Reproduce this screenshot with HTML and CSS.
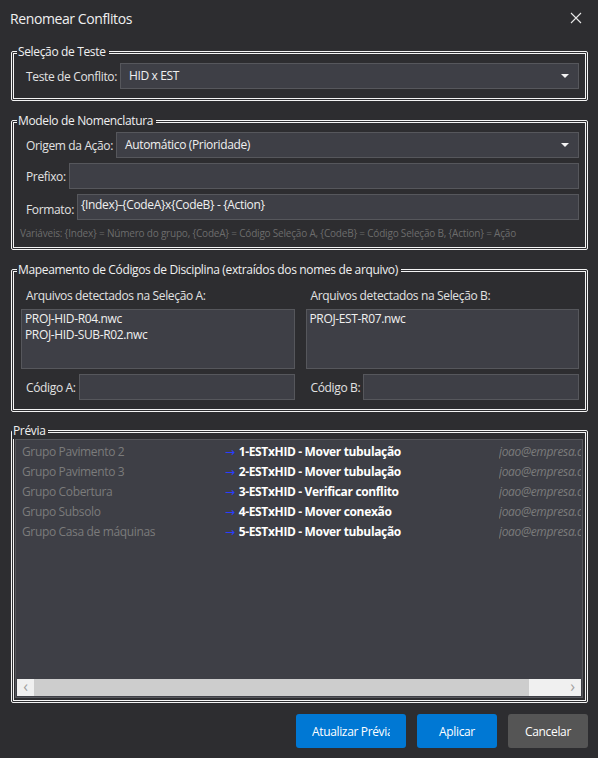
FILE: index.html
```html
<!DOCTYPE html>
<html lang="pt-BR">
<head>
    <meta charset="UTF-8">
    <title>Renomear Conflitos</title>
    <link rel="stylesheet" href="styles.css">
</head>
<body>
    <div class="dialog">
        <div class="titlebar">
            <span class="title">Renomear Conflitos</span>
            <svg class="close" width="12" height="12" viewBox="0 0 12 12">
                <path d="M1 1 L11 11 M11 1 L1 11" stroke="#e8e8e8" stroke-width="1.1" fill="none"/>
            </svg>
        </div>

        <fieldset class="group group-test">
            <legend>Seleção de Teste</legend>
            <div class="row">
                <label class="lbl">Teste de Conflito:</label>
                <div class="combo">HID x EST</div>
            </div>
        </fieldset>

        <fieldset class="group group-naming">
            <legend>Modelo de Nomenclatura</legend>
            <div class="row">
                <label class="lbl">Origem da Ação:</label>
                <div class="combo">Automático (Prioridade)</div>
            </div>
            <div class="row">
                <label class="lbl">Prefixo:</label>
                <div class="input"></div>
            </div>
            <div class="row">
                <label class="lbl lbl-low">Formato:</label>
                <div class="input input-top">{Index}-{CodeA}x{CodeB} - {Action}</div>
            </div>
            <p class="hint">Variáveis: {Index} = Número do grupo, {CodeA} = Código Seleção A, {CodeB} = Código Seleção B, {Action} = Ação</p>
        </fieldset>

        <fieldset class="group group-codes">
            <legend>Mapeamento de Códigos de Disciplina (extraídos dos nomes de arquivo)</legend>
            <div class="codes">
                <div class="side">
                    <label class="lbl">Arquivos detectados na Seleção A:</label>
                    <div class="filelist">
                        <div>PROJ-HID-R04.nwc</div>
                        <div>PROJ-HID-SUB-R02.nwc</div>
                    </div>
                    <div class="row">
                        <label class="lbl">Código A:</label>
                        <div class="input"></div>
                    </div>
                </div>
                <div class="side">
                    <label class="lbl">Arquivos detectados na Seleção B:</label>
                    <div class="filelist">
                        <div>PROJ-EST-R07.nwc</div>
                    </div>
                    <div class="row">
                        <label class="lbl">Código B:</label>
                        <div class="input"></div>
                    </div>
                </div>
            </div>
        </fieldset>

        <fieldset class="group group-preview">
            <legend>Prévia</legend>
            <div class="preview">
                <div class="preview-rows">
                    <div class="prow"><span class="grp">Grupo Pavimento 2</span><span class="new"><span class="arrow">→</span>1-ESTxHID - Mover tubulação</span><span class="who">joao@empresa.com</span></div>
                    <div class="prow"><span class="grp">Grupo Pavimento 3</span><span class="new"><span class="arrow">→</span>2-ESTxHID - Mover tubulação</span><span class="who">joao@empresa.com</span></div>
                    <div class="prow"><span class="grp">Grupo Cobertura</span><span class="new"><span class="arrow">→</span>3-ESTxHID - Verificar conflito</span><span class="who">joao@empresa.com</span></div>
                    <div class="prow"><span class="grp">Grupo Subsolo</span><span class="new"><span class="arrow">→</span>4-ESTxHID - Mover conexão</span><span class="who">joao@empresa.com</span></div>
                    <div class="prow"><span class="grp">Grupo Casa de máquinas</span><span class="new"><span class="arrow">→</span>5-ESTxHID - Mover tubulação</span><span class="who">joao@empresa.com</span></div>
                </div>
                <div class="hscroll">
                    <span class="sbtn">&lsaquo;</span>
                    <span class="thumb"></span>
                    <span class="track"></span>
                    <span class="sbtn">&rsaquo;</span>
                </div>
            </div>
        </fieldset>

        <div class="buttons">
            <button class="btn btn-blue btn-wide"><span class="btn-clip">Atualizar Prévia</span></button>
            <button class="btn btn-blue">Aplicar</button>
            <button class="btn btn-gray">Cancelar</button>
        </div>
    </div>
</body>
</html>
```

FILE: styles.css
```css
body {
    margin: 0;
    background-color: #2d2d30;
    font-family: 'Open Sans', 'Noto Sans', sans-serif;
    font-size: 12px;
    letter-spacing: -0.35px;
    color: #e0e0e0;
}

.dialog {
    width: 598px;
    height: 758px;
    box-sizing: border-box;
    padding: 0 10px 0 11px;
    display: flex;
    flex-direction: column;
    overflow: hidden;
}

.titlebar {
    height: 36px;
    display: flex;
    align-items: center;
    justify-content: space-between;
    padding: 0 6px 0 0;
    margin-left: -1px;
}

.title {
    font-size: 14px;
    letter-spacing: -0.4px;
    color: #f0f0f0;
}

/* Group boxes use a doubled white frame */
.group {
    margin: 8px 0 0;
    padding: 3px 6px 9px 7px;
    border: 3px double #f4f4f4;
    border-radius: 2px;
    min-width: 0;
}

.group legend {
    padding: 0 3px 0 1px;
    margin-left: -4px;
    line-height: 16px;
    color: #f0f0f0;
}

.group-naming {
    margin-top: 12px;
    padding-bottom: 7px;
}

.group-codes {
    margin-top: 12px;
}

.group-preview {
    margin-top: 11px;
}

.row {
    display: flex;
    align-items: center;
    gap: 3px;
}

.group-naming .row + .row {
    margin-top: 5px;
}

.lbl {
    padding-left: 5px;
    white-space: nowrap;
    color: #e2e2e2;
}

.lbl-low {
    align-self: flex-end;
    padding-bottom: 2px;
}

.combo,
.input {
    flex: 1;
    height: 26px;
    box-sizing: border-box;
    background-color: #3e3f46;
    border: 1px solid #56575c;
    padding: 0 8px;
    line-height: 24px;
    color: #f0f0f0;
    position: relative;
}

.combo::after {
    content: "";
    position: absolute;
    right: 9px;
    top: 10px;
    border-left: 4px solid transparent;
    border-right: 4px solid transparent;
    border-top: 4px solid #f4f4f4;
}

.input-top {
    padding: 2px 3px;
    line-height: 16px;
}

.hint {
    margin: 7px 0 0 -1px;
    font-size: 10px;
    letter-spacing: -0.2px;
    line-height: 13px;
    color: #6c6c6c;
    white-space: nowrap;
}

.codes {
    display: grid;
    grid-template-columns: 1fr 1fr;
    gap: 11px;
}

.side {
    display: flex;
    flex-direction: column;
}

.side > .lbl {
    line-height: 20px;
    margin: 5px 0 3px;
}

.filelist {
    height: 60px;
    box-sizing: border-box;
    background-color: #3e3f46;
    border: 1px solid #56575c;
    padding: 1px 3px;
    line-height: 16px;
    color: #f0f0f0;
}

.side .row {
    margin-top: 5px;
}

.group-preview {
    flex: 1;
    padding: 0 2px 2px 2px;
    display: flex;
    flex-direction: column;
}

.preview {
    flex: 1;
    display: flex;
    flex-direction: column;
    background-color: #3e3f46;
    border: 1px solid #56575c;
    padding: 1px;
    margin-left: -1px;
    overflow: hidden;
}

.preview-rows {
    flex: 1;
    padding-top: 1px;
}

.prow {
    display: grid;
    grid-template-columns: 203px 274px 1fr;
    height: 20px;
    line-height: 20px;
    padding-left: 5px;
    white-space: nowrap;
    overflow: hidden;
}

.grp {
    color: #7b7b7b;
}

.new {
    font-weight: 700;
    color: #ffffff;
}

.arrow {
    font-family: 'DejaVu Sans', sans-serif;
    font-size: 12px;
    color: #2a3cff;
    font-weight: 400;
    margin-right: 4px;
}

.who {
    font-style: italic;
    color: #7b7b7b;
    overflow: hidden;
}

.hscroll {
    height: 17px;
    display: flex;
    background-color: #cdcdcd;
}

.sbtn {
    width: 17px;
    background-color: #f0f0f0;
    color: #a0a0a0;
    font-size: 16px;
    line-height: 15px;
    text-align: center;
}

.thumb {
    flex: 1;
    background-color: #cdcdcd;
}

.track {
    width: 35px;
    background-color: #f0f0f0;
}

.buttons {
    display: flex;
    justify-content: flex-end;
    gap: 11px;
    padding: 11px 0 10px;
}

.btn {
    height: 34px;
    width: 80px;
    border: none;
    border-radius: 3px;
    font-family: inherit;
    font-size: 12px;
    letter-spacing: -0.35px;
    color: #ffffff;
    white-space: nowrap;
    padding: 0 4px;
}

.btn-wide {
    width: 110px;
    text-align: left;
    padding-left: 16px;
}

.btn-clip {
    display: block;
    width: 78px;
    overflow: hidden;
}

.btn-blue {
    background-color: #0078d4;
}

.btn-gray {
    background-color: #555555;
}
```
